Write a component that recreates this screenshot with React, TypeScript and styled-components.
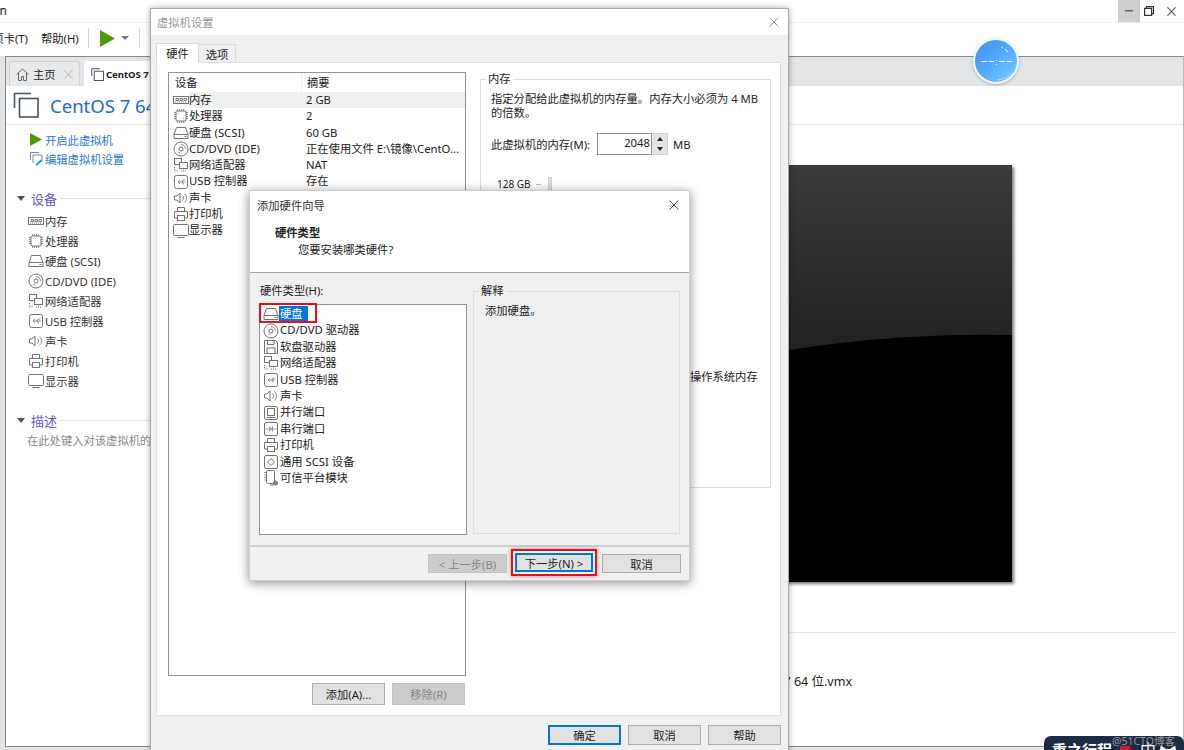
import React from "react";
import styled, { createGlobalStyle } from "styled-components";

const Global = createGlobalStyle`
  html, body { margin: 0; padding: 0; width: 1184px; height: 750px; overflow: hidden; background: #fff; }
  body { font-family: "Noto Sans", "Noto Sans CJK SC", sans-serif; font-size: 11.3px; color: #222; }
  #root { width: 1184px; height: 750px; }
  * { box-sizing: border-box; }
`;

/* ---------- shell ---------- */
const Page = styled.div`position: relative; width: 1184px; height: 750px; overflow: hidden; display: flex; flex-direction: column; background: #fff;`;
const TitleBar = styled.div`height: 22px; flex: none; display: flex; align-items: center; justify-content: space-between; font-size: 12px; color: #111;`;
const TitleClip = styled.div`width: 7px; height: 22px; line-height: 22px; overflow: hidden; display: flex; justify-content: flex-end; white-space: nowrap;`;
const Controls = styled.div`display: flex; height: 22px;`;
const Control = styled.div<{ $hot?: boolean; $w: number }>`width: ${p => p.$w}px; height: 22px; display: flex; align-items: center; justify-content: center; background: ${p => (p.$hot ? "#cfcfcf" : "transparent")};`;
const Toolbar = styled.div`height: 34px; flex: none; display: flex; align-items: center; border-top: 1px solid #efefef; padding-bottom: 3px; color: #222;`;
const MenuClip = styled.div`width: 28px; overflow: hidden; display: flex; justify-content: flex-end; white-space: nowrap;`;
const Menu = styled.div`margin-left: 13px; white-space: nowrap;`;
const ToolSep = styled.div<{ $left: number }>`width: 1px; height: 20px; background: #d4d4d4; margin-left: ${p => p.$left}px;`;
const PlayWrap = styled.div`margin-left: 11px; display: flex; align-items: center;`;
const Caret = styled.div`margin-left: 6px; width: 0; height: 0; border-left: 4px solid transparent; border-right: 4px solid transparent; border-top: 4px solid #777;`;

const Workspace = styled.div`flex: 1; min-height: 0; display: flex; background: #e3e4e6;`;
const Main = styled.div`margin-left: 5px; flex: 1; min-width: 0; height: 691px; display: flex; flex-direction: column; background: #fff; border: 1px solid #8a8a8a; border-right-color: #bbb;`;
const TabStrip = styled.div`height: 29px; flex: none; background: #e3e4e6; display: flex; align-items: flex-end; padding-left: 3px; gap: 4px;`;
const Tab = styled.div<{ $active?: boolean }>`
  height: 25px; width: ${p => (p.$active ? 180 : 71)}px; flex: none; display: flex; align-items: center;
  border: 1px solid ${p => (p.$active ? "#fff" : "#cfd0d2")}; border-bottom: none; border-radius: 3px 3px 0 0;
  background: ${p => (p.$active ? "#fff" : "#e8e9ea")}; padding-left: 6px;
`;
const TabLabel = styled.span<{ $bold?: boolean }>`margin-left: ${p => (p.$bold ? 2 : 4)}px; font-weight: ${p => (p.$bold ? 700 : 400)}; font-size: ${p => (p.$bold ? 9.5 : 11.3)}px; white-space: nowrap; flex: 1;`;
const TabClose = styled.span`margin-right: 6px; display: flex;`;
const VmHeader = styled.div`height: 39px; flex: none; display: flex; align-items: center; padding-left: 7px; border-bottom: 1px solid #e6e6e6;`;
const VmTitle = styled.div`margin-left: 11px; font-size: 18.5px; color: #1a6dc8; white-space: nowrap;`;
const Body = styled.div`flex: 1; min-height: 0; display: flex;`;
const Side = styled.div`width: 290px; flex: none; padding-top: 5px; overflow: hidden;`;
const Action = styled.div`height: 19px; display: flex; align-items: center; padding-left: 24px; color: #2a76d6; white-space: nowrap;`;
const ActionIcon = styled.span`width: 15px; display: flex;`;
const SectionHead = styled.div<{ $top: number; $after: number }>`height: 18px; display: flex; align-items: center; margin-top: ${p => p.$top}px; margin-bottom: ${p => p.$after}px; padding-left: 11px;`;
const Triangle = styled.div`width: 0; height: 0; border-left: 4.5px solid transparent; border-right: 4.5px solid transparent; border-top: 5px solid #44546a;`;
const SectionTitle = styled.span`margin-left: 6px; font-size: 13px; color: #6a55c4;`;
const SectionLine = styled.div`flex: 1; height: 1px; background: #e4e4e4; margin-left: 3px;`;
const SideRow = styled.div`height: 20px; display: flex; align-items: center; padding-left: 22px; white-space: nowrap; color: #333;`;
const SideLabel = styled.span`margin-left: 1px;`;
const SideHint = styled.div`margin-top: 3px; padding-left: 21px; color: #888; white-space: nowrap; height: 18px; line-height: 18px;`;

const Stage = styled.div`flex: 1; min-width: 0; display: flex; flex-direction: column; padding: 40px 7px 0 0;`;
const Preview = styled.div`margin-left: 403px; width: 313px; height: 417px; flex: none; box-shadow: 2px 2px 3px #777; display: flex;`;
const PreviewArt = styled.svg`width: 313px; height: 417px; display: block;`;
const Details = styled.div`margin-top: 50px; border-top: 1px solid #e6e6e6; padding-top: 40px;`;
const DetailText = styled.div`width: 556px; text-align: right; font-size: 12.5px; line-height: 17px; color: #222; white-space: nowrap;`;

/* ---------- overlays ---------- */
const Badge = styled.div`
  position: absolute; left: 973px; top: 38px; width: 46px; height: 46px; border-radius: 50%; border: 2px solid #f2f6fb;
  background: linear-gradient(135deg, #3e8ef7 0%, #58aefc 55%, #7dd0ff 100%); box-shadow: 0 1px 3px rgba(0,0,0,.25);
`;
const BadgeArt = styled.svg`display: block; width: 42px; height: 42px;`;
const Stamp = styled.div`
  position: absolute; left: 1044px; top: 736px; width: 140px; height: 30px; border-radius: 7px 7px 0 0; background: #1e2b45;
  display: flex; align-items: flex-start; padding: 4px 0 0 8px; color: #fff; overflow: hidden; white-space: nowrap;
`;
const StampName = styled.span`font-family: "Noto Sans CJK SC", serif; font-weight: 700; font-size: 15px; line-height: 20px; width: 60px; flex: none;`;
const StampSeal = styled.span`width: 10px; height: 8px; margin: 6px 0 0 8px; background: #c8202a; flex: none;`;
const StampLang = styled.span`margin-left: 10px; font-size: 16px; line-height: 20px; flex: none;`;
const StampEars = styled.svg`margin: 2px 0 0 2px; width: 20px; height: 16px; flex: none;`;
const StampMark = styled.div`position: absolute; left: 1112px; top: 734px; font-size: 10.5px; line-height: 14px; color: rgba(190,190,190,.75); white-space: nowrap;`;

/* ---------- settings dialog ---------- */
const Dialog = styled.div`
  position: absolute; left: 150px; top: 8px; width: 639px; height: 760px; display: flex; flex-direction: column;
  background: #f0f0f0; border: 1px solid #a8a8a8; box-shadow: 0 0 6px rgba(0,0,0,.35);
`;
const DialogTitle = styled.div`height: 26px; flex: none; background: #fff; display: flex; align-items: center; justify-content: space-between; padding: 0 9px 0 6px; color: #999;`;
const DialogTabs = styled.div`height: 27px; flex: none; display: flex; align-items: flex-end; padding-left: 5px;`;
const DialogTab = styled.div<{ $active?: boolean }>`
  height: ${p => (p.$active ? 20 : 18)}px; width: ${p => (p.$active ? 43 : 37)}px; display: flex; align-items: center; justify-content: center; padding-bottom: ${p => (p.$active ? 2 : 0)}px;
  background: ${p => (p.$active ? "#fff" : "#f0f0f0")}; border: 1px solid #d9d9d9; border-bottom: none; margin-bottom: ${p => (p.$active ? -1 : 0)}px;
  ${p => (p.$active ? "position: relative; z-index: 1;" : "border-left: none;")}
`;
const TabPanel = styled.div`margin: 0 7px 0 5px; height: 654px; flex: none; background: #fff; border: 1px solid #e0e0e0; padding: 9px 9px 0 11px; display: flex;`;
const LeftPane = styled.div`width: 298px; flex: none; display: flex; flex-direction: column;`;
const DeviceList = styled.div`height: 604px; border: 1px solid #8e9299; overflow: hidden;`;
const DeviceHead = styled.div`height: 19px; display: grid; grid-template-columns: 132px 1fr; align-items: center;`;
const HeadCell = styled.div<{ $second?: boolean }>`padding-left: ${p => (p.$second ? 5 : 6)}px; height: 19px; line-height: 19px; ${p => (p.$second ? "border-left: 1px solid #f0f0f0;" : "")}`;
const DeviceRow = styled.div`height: 16.3px; display: flex; align-items: center; padding-left: 4px; white-space: nowrap;`;
const DeviceIcon = styled.span`width: 16px; height: 16px; flex: none; display: flex;`;
const DeviceBody = styled.div<{ $selected?: boolean }>`flex: 1; height: 16.3px; line-height: 16.3px; display: flex; background: ${p => (p.$selected ? "#f0f0f0" : "transparent")};`;
const DeviceName = styled.span`width: 117px; flex: none;`;
const PaneActions = styled.div`margin-top: 7px; display: flex; justify-content: flex-end; gap: 7px; padding-right: 1px;`;
const Button = styled.div<{ $w: number; $h?: number; $disabled?: boolean; $primary?: boolean }>`
  width: ${p => p.$w}px; height: ${p => p.$h ?? 22}px; flex: none; display: flex; align-items: center; justify-content: center; white-space: nowrap;
  background: ${p => (p.$disabled ? "#cccccc" : "#e1e1e1")}; color: ${p => (p.$disabled ? "#858585" : "#222")};
  border: ${p => (p.$primary ? "2px solid #0078d7" : `1px solid ${p.$disabled ? "#c2c2c2" : "#adadad"}`)};
`;
const RightPane = styled.div`margin-left: 14px; width: 291px; flex: none; padding-top: 7px;`;
const GroupBox = styled.div<{ $h: number }>`position: relative; height: ${p => p.$h}px; border: 1px solid #dcdcdc;`;
const Legend = styled.span<{ $bg: string }>`position: absolute; left: 5px; top: -8px; padding: 0 2px; line-height: 14px; background: ${p => p.$bg};`;
const MemoryBody = styled.div`padding: 12px 10px 0 10px;`;
const Para = styled.div`line-height: 14px; width: 270px;`;
const MemoryRow = styled.div`margin-top: 13px; height: 22px; display: flex; align-items: center;`;
const MemoryLabel = styled.span`width: 106px; flex: none; white-space: nowrap;`;
const SpinInput = styled.div`width: 55px; height: 22px; border: 1px solid #8e9299; background: #fff; text-align: right; padding-right: 1px; line-height: 18px;`;
const SpinButtons = styled.div`width: 16px; height: 22px; background: #e4e4e4; display: flex; flex-direction: column; align-items: center; justify-content: space-around; border: 1px solid #d0d0d0; border-left: none;`;
const SpinUp = styled.i`width: 0; height: 0; border-left: 3.5px solid transparent; border-right: 3.5px solid transparent; border-bottom: 4px solid #222;`;
const SpinDown = styled.i`width: 0; height: 0; border-left: 3.5px solid transparent; border-right: 3.5px solid transparent; border-top: 4px solid #222;`;
const MemoryUnit = styled.span`margin-left: 5px;`;
const SliderArea = styled.div`margin-top: 22px; display: flex;`;
const SliderLabel = styled.div`width: 45px; padding-left: 6px; flex: none; white-space: nowrap; height: 14px; line-height: 14px; font-size: 10px;`;
const SliderTick = styled.div`width: 5px; height: 1px; background: #bbb; margin: 7px 7px 0 0; flex: none;`;
const SliderTrack = styled.div`width: 4px; height: 200px; background: #e0e0e0; border: 1px solid #d0d0d0; flex: none;`;
const SliderNote = styled.div`margin: 193px 0 0 104px; white-space: nowrap; line-height: 14px;`;
const DialogFooter = styled.div`margin-top: 9px; display: flex; justify-content: flex-end; gap: 7px; padding-right: 7px;`;

/* ---------- wizard ---------- */
const Wizard = styled.div`
  position: absolute; left: 249px; top: 190px; width: 441px; height: 391px; display: flex; flex-direction: column;
  background: #f0f0f0; border: 1px solid #cfcfcf; box-shadow: 0 2px 10px rgba(0,0,0,.45);
`;
const WizardHeader = styled.div`height: 82px; flex: none; background: #fff; border-bottom: 1px solid #a6a6a6; display: flex; flex-direction: column;`;
const WizardTitle = styled.div`height: 28px; display: flex; align-items: center; justify-content: space-between; padding: 0 10px 0 7px; flex: none; color: #333;`;
const WizardHeading = styled.div`margin: 7px 0 0 25px; font-weight: 700; line-height: 14px;`;
const WizardSub = styled.div`margin: 3px 0 0 48px; line-height: 14px;`;
const WizardBody = styled.div`height: 272px; flex: none; display: flex;`;
const TypeColumn = styled.div`margin-left: 9px; width: 208px; flex: none; padding-top: 11px;`;
const TypeLabel = styled.div`padding-left: 1px; line-height: 14px;`;
const TypeList = styled.div`margin-top: 6px; height: 231px; padding-top: 1px; background: #fff; border: 1px solid #8e9299;`;
const TypeRow = styled.div`position: relative; height: 16.4px; display: flex; align-items: center; padding-left: 3px; white-space: nowrap;`;
const TypeName = styled.span<{ $selected?: boolean }>`
  padding: 0 5px 0 1px; height: 16.4px; line-height: 16.4px;
  ${p => (p.$selected ? "background: #0078d7; color: #fff;" : "")}
`;
const RedMark = styled.div`position: absolute; left: -1px; top: -3px; width: 58px; height: 20px; border: 2px solid #e3101a;`;
const ExplainColumn = styled.div`margin-left: 6px; width: 207px; flex: none; padding-top: 18px;`;
const ExplainBody = styled.div`padding: 12px 0 0 11px; line-height: 14px;`;
const WizardFooter = styled.div`flex: 1; border-top: 2px solid #cfcfcf; padding-top: 7px; display: flex; justify-content: flex-end; padding-right: 8px;`;
const RedFrame = styled.div`margin: -5px 5px 0 4px; height: 27px; border: 2px solid #e3101a; padding: 2px; box-shadow: 0 0 4px rgba(0,0,0,.4); display: flex;`;

/* ---------- drawings ---------- */
type Kind = "memory" | "cpu" | "disk" | "cd" | "net" | "usb" | "sound" | "printer" | "monitor" | "floppy" | "parallel" | "serial" | "scsi" | "tpm";
const shapes: Record<Kind, React.ReactNode> = {
  memory: <><rect x="0.5" y="4.5" width="15" height="7" /><path d="M3 6.5h2.5v2H3zM7 6.5h2.5v2H7zM11 6.5h2.5v2H11z" /><path d="M2 10h12" strokeDasharray="1 1" /></>,
  cpu: <><rect x="3" y="3" width="10" height="10" rx="1" /><path d="M1 4.5h2M1 6.5h2M1 8.5h2M1 10.5h2M13 4.5h2M13 6.5h2M13 8.5h2M13 10.5h2M4.5 1v2M6.5 1v2M8.5 1v2M10.5 1v2M4.5 13v2M6.5 13v2M8.5 13v2M10.5 13v2" strokeWidth="0.8" /><path d="M5.5 5.5h.6M10 10.2h.6" /></>,
  disk: <><path d="M3.5 2.5h9l2.5 7v4H1v-4z" /><path d="M1 9.5h14M11.5 11.5h2" /></>,
  cd: <><circle cx="8" cy="8" r="7" /><circle cx="8" cy="8" r="2" /><path d="M8 3.5a4.5 4.5 0 0 1 4.5 4.5M5 10.8a3.9 3.9 0 0 0 2 1" strokeWidth="0.8" /></>,
  net: <><rect x="1.5" y="1.5" width="7" height="6" /><rect x="6.5" y="5.5" width="8" height="6" fill="#fff" /><path d="M10.5 11.5v2M8 14h5M1.5 10v4h3" strokeDasharray="1 1" /></>,
  usb: <><rect x="1.5" y="1.5" width="13" height="13" rx="2" /><path d="M12.500 8H5M7 6 5 8l2 2M9 8l1-2h2M9 8l1 2h1" strokeWidth="0.8" /></>,
  sound: <><path d="M1.5 6H4l3-3v10l-3-3H1.500z" /><path d="M9.5 5.500a3.500 3.500 0 0 1 0 5M11.500 3.500a6 6 0 0 1 0 9" strokeWidth="0.8" /></>,
  printer: <><path d="M4.5 5.500v-4h7v4" /><path d="M4 12H1.500V5.500h13V12H12" /><rect x="4.500" y="9.500" width="7" height="5" /></>,
  monitor: <><rect x="0.5" y="1.500" width="15" height="11" rx="1" /><path d="M4.500 14.500h7" /></>,
  floppy: <><path d="M1.5 1.500h11l2 2v11h-13z" /><path d="M4.500 1.500v4h6.500v-4M4 14.500V9h8v5.500" /></>,
  parallel: <><rect x="1.5" y="1.500" width="13" height="13" rx="1.500" /><rect x="4.500" y="3.500" width="7" height="7" /><path d="M3.500 12.500h9" /></>,
  serial: <><rect x="1.5" y="1.500" width="13" height="13" rx="1.500" /><path d="M2.500 8h3M10.500 8h3M6.500 5.500v5M9.500 5.500v5" strokeWidth="0.8" /><circle cx="8" cy="8" r="1" strokeWidth="0.7" /></>,
  scsi: <><rect x="1.5" y="1.500" width="13" height="13" rx="1.500" /><path d="M8 4.500 11.500 8 8 11.500 4.500 8z" /></>,
  tpm: <><rect x="3.5" y="0.500" width="8" height="13" rx="1" /><path d="M1 2.500h2.500M1 5h2.500M1 7.500h2.500M1 10h2.500" strokeWidth="0.8" /><circle cx="12.500" cy="13" r="2" fill="#8a8a8a" /><path d="M7 15h4" /></>,
};
const Glyph = styled.svg`width: 16px; height: 16px; display: block; fill: none; stroke: #747474; stroke-width: 1;`;
const Icon = ({ kind }: { kind: Kind }) => <Glyph viewBox="0 0 16 16">{shapes[kind]}</Glyph>;

const Copies = styled.svg<{ $size: number }>`width: ${p => p.$size}px; height: ${p => p.$size}px; display: block; flex: none;`;
const CopyIcon = ({ size, weight }: { size: number; weight: number }) => (
  <Copies $size={size} viewBox="0 0 26 26" fill="none" stroke="#46566a" strokeWidth={weight}>
    <path d="M1.500 16V1.500H18" />
    <rect x="6.500" y="6.500" width="18.500" height="18.500" />
  </Copies>
);
const CrossArt = styled.svg`display: block;`;
const Cross = ({ size, color }: { size: number; color: string }) => (
  <CrossArt width={size} height={size} viewBox="0 0 10 10" stroke={color} strokeWidth={size > 9 ? 0.9 : 1.2} fill="none">
    <path d="M0.500 0.500l9 9M9.500 0.500l-9 9" />
  </CrossArt>
);

const settingsRows: { k: Kind; n: string; s?: string }[] = [
  { k: "memory", n: "内存", s: "2 GB" },
  { k: "cpu", n: "处理器", s: "2" },
  { k: "disk", n: "硬盘 (SCSI)", s: "60 GB" },
  { k: "cd", n: "CD/DVD (IDE)", s: "正在使用文件 E:\\镜像\\CentO..." },
  { k: "net", n: "网络适配器", s: "NAT" },
  { k: "usb", n: "USB 控制器", s: "存在" },
  { k: "sound", n: "声卡" },
  { k: "printer", n: "打印机" },
  { k: "monitor", n: "显示器" },
];
const sideRows: { k: Kind; n: string }[] = [
  { k: "memory", n: "内存" },
  { k: "cpu", n: "处理器" },
  { k: "disk", n: "硬盘 (SCSI)" },
  { k: "cd", n: "CD/DVD (IDE)" },
  { k: "net", n: "网络适配器" },
  { k: "usb", n: "USB 控制器" },
  { k: "sound", n: "声卡" },
  { k: "printer", n: "打印机" },
  { k: "monitor", n: "显示器" },
];
const hardwareTypes: { k: Kind; n: string }[] = [
  { k: "disk", n: "硬盘" },
  { k: "cd", n: "CD/DVD 驱动器" },
  { k: "floppy", n: "软盘驱动器" },
  { k: "net", n: "网络适配器" },
  { k: "usb", n: "USB 控制器" },
  { k: "sound", n: "声卡" },
  { k: "parallel", n: "并行端口" },
  { k: "serial", n: "串行端口" },
  { k: "printer", n: "打印机" },
  { k: "scsi", n: "通用 SCSI 设备" },
  { k: "tpm", n: "可信平台模块" },
];

export default function App() {
  return (
    <Page>
      <Global />
      <TitleBar>
        <TitleClip><span>on</span></TitleClip>
        <Controls>
          <Control $hot $w={22}>
            <svg width="8" height="2"><rect width="8" height="1.500" fill="#666" /></svg>
          </Control>
          <Control $w={18}>
            <svg width="10" height="10" viewBox="0 0 10 10" fill="none" stroke="#333" strokeWidth="1.200"><rect x="0.600" y="2.400" width="7" height="7" /><path d="M2.500 2.400V0.600h7v7H7.600" /></svg>
          </Control>
          <Control $w={26}><Cross size={9} color="#555" /></Control>
        </Controls>
      </TitleBar>
      <Toolbar>
        <MenuClip><span>选项卡(T)</span></MenuClip>
        <Menu>帮助(H)</Menu>
        <ToolSep $left={9} />
        <PlayWrap>
          <svg width="15" height="17" viewBox="0 0 15 17"><path d="M0 0l15 8.500L0 17z" fill="#4f9a0c" /></svg>
          <Caret />
        </PlayWrap>
        <ToolSep $left={10} />
      </Toolbar>
      <Workspace>
        <Main>
          <TabStrip>
            <Tab>
              <svg width="13" height="13" viewBox="0 0 13 13" fill="none" stroke="#666" strokeWidth="1"><path d="M0.500 6.500 6.500 1l6 5.500M2.500 5v7.500h3V8.500h2v4h3V5" /></svg>
              <TabLabel>主页</TabLabel>
              <TabClose><Cross size={9} color="#bdbdbd" /></TabClose>
            </Tab>
            <Tab $active>
              <CopyIcon size={13} weight={2} />
              <TabLabel $bold>CentOS 7 64 位</TabLabel>
            </Tab>
          </TabStrip>
          <VmHeader>
            <CopyIcon size={26} weight={1.600} />
            <VmTitle>CentOS 7 64 位</VmTitle>
          </VmHeader>
          <Body>
            <Side>
              <Action>
                <ActionIcon><svg width="12" height="13" viewBox="0 0 12 13"><path d="M0 0l12 6.500L0 13z" fill="#4f9a0c" /></svg></ActionIcon>
                开启此虚拟机
              </Action>
              <Action>
                <ActionIcon>
                  <svg width="14" height="14" viewBox="0 0 14 14" fill="none" stroke="#7a8794" strokeWidth="1"><path d="M0.500 8V0.500H9" /><path d="M3 11V3h9v5" /><path d="M6 13l6-5" stroke="#1f8fd8" strokeWidth="1.800" /></svg>
                </ActionIcon>
                编辑虚拟机设置
              </Action>
              <SectionHead $top={21} $after={4}>
                <Triangle />
                <SectionTitle>设备</SectionTitle>
                <SectionLine />
              </SectionHead>
              {sideRows.map(r => (
                <SideRow key={r.n}>
                  <Icon kind={r.k} />
                  <SideLabel>{r.n}</SideLabel>
                </SideRow>
              ))}
              <SectionHead $top={20} $after={0}>
                <Triangle />
                <SectionTitle>描述</SectionTitle>
                <SectionLine />
              </SectionHead>
              <SideHint>在此处键入对该虚拟机的描述。</SideHint>
            </Side>
            <Stage>
              <Preview>
                <PreviewArt viewBox="0 0 313 417">
                  <defs>
                    <linearGradient id="sheen" x1="0" y1="0" x2="0" y2="1">
                      <stop offset="0" stopColor="#3a3a3a" />
                      <stop offset="1" stopColor="#1c1c1c" />
                    </linearGradient>
                  </defs>
                  <rect width="313" height="230" fill="url(#sheen)" />
                  <path d="M0 203Q150 167 313 170V417H0z" fill="#000" />
                </PreviewArt>
              </Preview>
              <Details>
                <DetailText>D:\虚拟机\CentOS 7 64 位.vmx</DetailText>
              </Details>
            </Stage>
          </Body>
        </Main>
      </Workspace>

      <Badge>
        <BadgeArt viewBox="0 0 42 42" fill="none" stroke="#e8f4ff" strokeWidth="1">
          <path d="M6 21.500h6M13.500 21.500h6M24 21.500h6M31.500 21.500h6" />
          <path d="M21.500 20v1M21.500 24v1M26 7l2 1M30 9l3 3" />
          <path d="M22 40q10-1 15-7" stroke="#a6e0ff" />
        </BadgeArt>
      </Badge>
      <Stamp>
        <StampName>重之行程</StampName>
        <StampSeal />
        <StampLang>中</StampLang>
        <StampEars viewBox="0 0 22 16"><path d="M1 16 3 3l6 4h4l6-4 2 13z" fill="#fff" /></StampEars>
      </Stamp>
      <StampMark>@51CTO博客</StampMark>

      <Dialog>
        <DialogTitle>
          虚拟机设置
          <Cross size={10} color="#8a8a8a" />
        </DialogTitle>
        <DialogTabs>
          <DialogTab $active>硬件</DialogTab>
          <DialogTab>选项</DialogTab>
        </DialogTabs>
        <TabPanel>
          <LeftPane>
            <DeviceList>
              <DeviceHead>
                <HeadCell>设备</HeadCell>
                <HeadCell $second>摘要</HeadCell>
              </DeviceHead>
              {settingsRows.map((r, i) => (
                <DeviceRow key={r.n}>
                  <DeviceIcon><Icon kind={r.k} /></DeviceIcon>
                  <DeviceBody $selected={i === 0}>
                    <DeviceName>{r.n}</DeviceName>
                    <span>{r.s}</span>
                  </DeviceBody>
                </DeviceRow>
              ))}
            </DeviceList>
            <PaneActions>
              <Button $w={73}>添加(A)...</Button>
              <Button $w={73} $disabled>移除(R)</Button>
            </PaneActions>
          </LeftPane>
          <RightPane>
            <GroupBox $h={409}>
              <Legend $bg="#fff">内存</Legend>
              <MemoryBody>
                <Para>指定分配给此虚拟机的内存量。内存大小必须为 4 MB 的倍数。</Para>
                <MemoryRow>
                  <MemoryLabel>此虚拟机的内存(M):</MemoryLabel>
                  <SpinInput>2048</SpinInput>
                  <SpinButtons><SpinUp /><SpinDown /></SpinButtons>
                  <MemoryUnit>MB</MemoryUnit>
                </MemoryRow>
                <SliderArea>
                  <SliderLabel>128 GB</SliderLabel>
                  <SliderTick />
                  <SliderTrack />
                  <SliderNote>客户机操作系统内存</SliderNote>
                </SliderArea>
              </MemoryBody>
            </GroupBox>
          </RightPane>
        </TabPanel>
        <DialogFooter>
          <Button $w={73} $h={20} $primary>确定</Button>
          <Button $w={73} $h={20}>取消</Button>
          <Button $w={73} $h={20}>帮助</Button>
        </DialogFooter>
      </Dialog>

      <Wizard>
        <WizardHeader>
          <WizardTitle>
            添加硬件向导
            <Cross size={10} color="#333" />
          </WizardTitle>
          <WizardHeading>硬件类型</WizardHeading>
          <WizardSub>您要安装哪类硬件?</WizardSub>
        </WizardHeader>
        <WizardBody>
          <TypeColumn>
            <TypeLabel>硬件类型(H):</TypeLabel>
            <TypeList>
              {hardwareTypes.map((t, i) => (
                <TypeRow key={t.n}>
                  <Icon kind={t.k} />
                  <TypeName $selected={i === 0}>{t.n}</TypeName>
                  {i === 0 && <RedMark />}
                </TypeRow>
              ))}
            </TypeList>
          </TypeColumn>
          <ExplainColumn>
            <GroupBox $h={243}>
              <Legend $bg="#f0f0f0">解释</Legend>
              <ExplainBody>添加硬盘。</ExplainBody>
            </GroupBox>
          </ExplainColumn>
        </WizardBody>
        <WizardFooter>
          <Button $w={79} $h={19} $disabled>&lt; 上一步(B)</Button>
          <RedFrame>
            <Button $w={78} $h={19} $primary>下一步(N) &gt;</Button>
          </RedFrame>
          <Button $w={79} $h={19}>取消</Button>
        </WizardFooter>
      </Wizard>
    </Page>
  );
}
